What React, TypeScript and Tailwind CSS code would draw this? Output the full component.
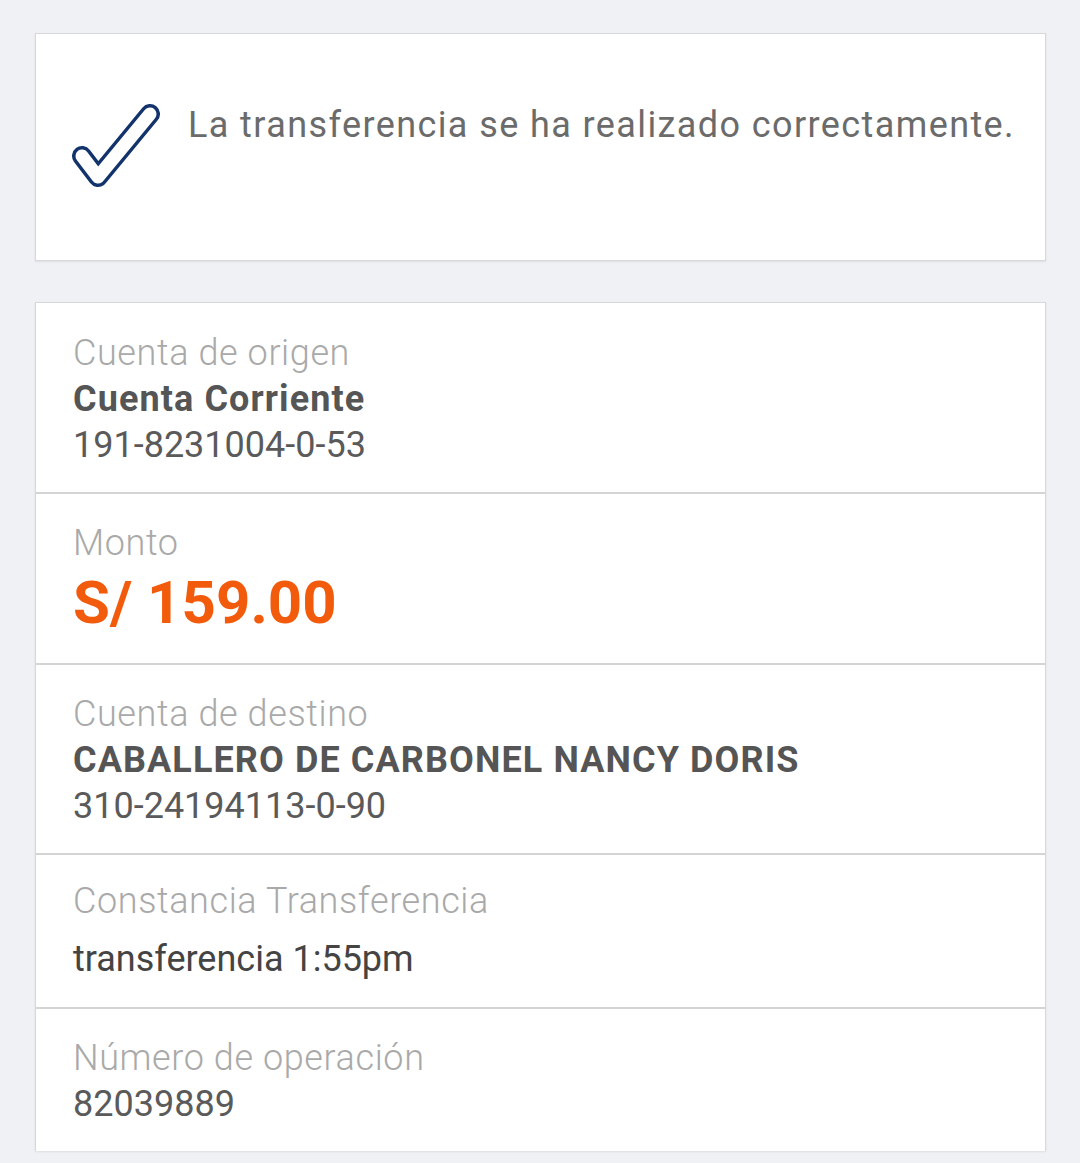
import React from "react";

type Row = {
  label: string;
  title?: string;
  value?: string;
  amount?: string;
  spaced?: boolean;
};

const rows: Row[] = [
  { label: "Cuenta de origen", title: "Cuenta Corriente", value: "191-8231004-0-53" },
  { label: "Monto", amount: "S/ 159.00" },
  {
    label: "Cuenta de destino",
    title: "CABALLERO DE CARBONEL NANCY DORIS",
    value: "310-24194113-0-90",
  },
  { label: "Constancia Transferencia", value: "transferencia 1:55pm", spaced: true },
  { label: "Número de operación", value: "82039889" },
];

const CheckIcon = () => (
  <svg width="90" height="92" viewBox="0 0 90 92" className="shrink-0">
    <polyline
      points="12,54 28,75 80,12"
      fill="none"
      stroke="#12336b"
      strokeWidth="20"
      strokeLinecap="round"
      strokeLinejoin="round"
    />
    <polyline
      points="12,54 28,75 80,12"
      fill="none"
      stroke="#ffffff"
      strokeWidth="13"
      strokeLinecap="round"
      strokeLinejoin="round"
    />
  </svg>
);

export default function App() {
  return (
    <div
      className="min-h-screen bg-[#f0f1f5] pt-[33px] pl-[35px] pr-[34px] overflow-hidden"
      style={{ fontFamily: "Roboto, 'Open Sans', sans-serif" }}
    >
      <div className="box-border h-[228px] bg-white border border-[#d6d8dc] shadow-[0_1px_2px_rgba(0,0,0,0.08)] pl-[34px] pt-[68px] flex items-start">
        <CheckIcon />
        <p className="ml-[28px] text-[36px] leading-[46px] text-[#6b6b6b] tracking-[1.4px]">
          La transferencia se ha realizado correctamente.
        </p>
      </div>

      <div className="mt-[41px] bg-white border-x border-t border-[#d6d8dc] shadow-[0_1px_2px_rgba(0,0,0,0.08)]">
        {rows.map((row, i) => (
          <div
            key={row.label}
            className={`pl-[37px] pr-6 ${
              row.spaced
                ? "pt-[23px] pb-[25px]"
                : i === 0
                ? "pt-[27px] pb-[24px]"
                : "pt-[26px] pb-[24px]"
            } ${i < rows.length - 1 ? "border-b-2 border-[#d4d4d4]" : ""}`}
          >
            <div className="text-[36px] leading-[46px] font-light tracking-[0.6px] text-[#a9a9a9]">
              {row.label}
            </div>
            {row.title && (
              <div className="text-[36px] leading-[46px] font-bold tracking-[1.1px] text-[#555555]">
                {row.title}
              </div>
            )}
            {row.amount && (
              <div className="text-[60px] leading-[73px] font-bold text-[#f35b0c]">
                {row.amount}
              </div>
            )}
            {row.value && (
              <div
                className={`text-[36px] leading-[46px] ${
                  row.spaced ? "mt-[12px] text-[#444444]" : "text-[#5a5a5a]"
                }`}
              >
                {row.value}
              </div>
            )}
          </div>
        ))}
      </div>
    </div>
  );
}
